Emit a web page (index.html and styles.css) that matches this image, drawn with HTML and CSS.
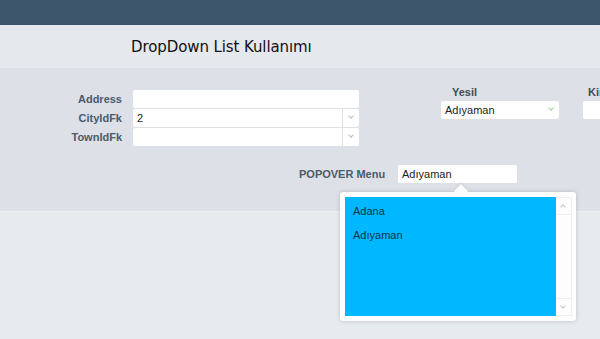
FILE: index.html
```html
<!DOCTYPE html>
<html lang="tr">
<head>
<meta charset="UTF-8" />
<title>DropDown List Kullanımı</title>
<link rel="stylesheet" href="styles.css">
</head>
<body>
<header class="topbar"></header>
<div class="title-band">
  <h1>DropDown List Kullanımı</h1>
</div>
<section class="form-area">
  <div class="form-row">
    <div class="fields">
      <label>Address</label>
      <div class="input"></div>
      <label>CityIdFk</label>
      <div class="input select"><span>2</span><i class="chev"></i></div>
      <label>TownIdFk</label>
      <div class="input select"><span></span><i class="chev"></i></div>
    </div>
    <div class="col yesil">
      <label>Yesil</label>
      <div class="input select plain"><span>Adıyaman</span><i class="chev green"></i></div>
    </div>
    <div class="col kim">
      <label>Kim</label>
      <div class="input"></div>
    </div>
  </div>
  <div class="popover-row">
    <label>POPOVER Menu</label>
    <div class="pop-anchor">
      <div class="input wide"><span>Adıyaman</span></div>
      <!-- open popover list -->
      <div class="popover">
        <div class="list">
          <div class="item">Adana</div>
          <div class="item">Adıyaman</div>
        </div>
        <div class="scroll">
          <div class="sbtn up"><i class="chev flip"></i></div>
          <div class="strack"></div>
          <div class="sbtn"><i class="chev"></i></div>
        </div>
      </div>
    </div>
  </div>
</section>
<main class="rest"></main>
</body>
</html>
```

FILE: styles.css
```css
body {
  margin: 0;
  font-family: "Liberation Sans", Arial, sans-serif;
  background: #e6ebee;
  width: 600px;
  height: 339px;
  overflow: hidden;
}
.topbar {
  height: 25px;
  background: #3e566c;
}
.title-band {
  height: 43px;
  background: #e5e9ed;
  display: flex;
  align-items: center;
}
.title-band h1 {
  margin: 0 0 0 131px;
  font-family: "DejaVu Sans", sans-serif;
  font-weight: normal;
  font-size: 15px;
  letter-spacing: -0.1px;
  color: #111;
}

/* form area */
.form-area {
  height: 144px;
  background: #dde0e7;
  box-sizing: border-box;
  padding-top: 18px;
  border-bottom: 1px solid #eef0f4;
}
.form-row {
  display: flex;
  align-items: flex-start;
}
.form-row > * {
  flex-shrink: 0;
}
label {
  font-size: 11px;
  font-weight: bold;
  color: #4b5b6a;
}
.fields {
  display: grid;
  grid-template-columns: 122px 226px;
  column-gap: 11px;
  row-gap: 1px;
  align-items: center;
  padding-top: 4px;
}
.fields label {
  text-align: right;
}
.input {
  height: 18px;
  background: #fff;
  border-radius: 2px;
  box-sizing: border-box;
  display: flex;
  align-items: center;
  font-size: 11px;
  color: #222;
}
.input span {
  flex: 1;
  padding-left: 4px;
}
.select .chev {
  width: 16px;
  height: 100%;
  border-left: 1px solid #dcdfe4;
  position: relative;
}
.chev::after {
  content: "";
  position: absolute;
  left: 6px;
  top: 5px;
  width: 3px;
  height: 3px;
  border-right: 1px solid #b8bcc2;
  border-bottom: 1px solid #b8bcc2;
  transform: rotate(45deg);
}
.select.plain .chev {
  border-left: none;
}
.chev.green::after {
  border-color: #9fd49a;
}
.col {
  display: flex;
  flex-direction: column;
  gap: 3px;
}
.col label {
  color: #3d4d5b;
}
.yesil {
  margin-left: 82px;
  width: 118px;
}
.yesil label {
  padding-left: 11px;
}
.kim {
  margin-left: 24px;
  width: 60px;
}
.kim label {
  padding-left: 5px;
}

/* popover row */
.popover-row {
  display: flex;
  align-items: center;
  margin: 19px 0 0 299px;
}
.popover-row label {
  width: 99px;
}
.pop-anchor {
  position: relative;
}
.input.wide {
  width: 119px;
}
.popover {
  position: absolute;
  left: -58px;
  top: 27px;
  width: 236px;
  height: 129px;
  background: #fdfdfd;
  border-radius: 3px;
  box-shadow: 0 0 4px rgba(0, 0, 0, 0.18);
  box-sizing: border-box;
  padding: 5px 4px 5px 5px;
  display: flex;
  z-index: 5;
}
.popover::before {
  content: "";
  position: absolute;
  top: -6px;
  left: 116px;
  width: 10px;
  height: 10px;
  background: #fdfdfd;
  transform: rotate(45deg);
  box-shadow: -1px -1px 2px rgba(0, 0, 0, 0.08);
}
.list {
  width: 212px;
  background: #00b8ff;
  padding-top: 8px;
  position: relative;
}
.item {
  font-size: 11px;
  color: #10324a;
  padding: 0 8px;
  height: 24px;
  line-height: 12px;
}
.scroll {
  width: 15px;
  display: flex;
  flex-direction: column;
  border: 1px solid #eceef1;
  border-left: none;
}
.strack {
  flex: 1;
  border-top: 1px solid #eceef1;
  border-bottom: 1px solid #eceef1;
}
.sbtn {
  height: 16px;
  position: relative;
}
.sbtn .chev {
  position: absolute;
  inset: 0;
}
.sbtn .chev::after {
  left: 5px;
  top: 5px;
  border-color: #c2c6cc;
}
.sbtn .chev.flip::after {
  top: 7px;
  transform: rotate(-135deg);
}
.rest {
  height: 100px;
}
```
